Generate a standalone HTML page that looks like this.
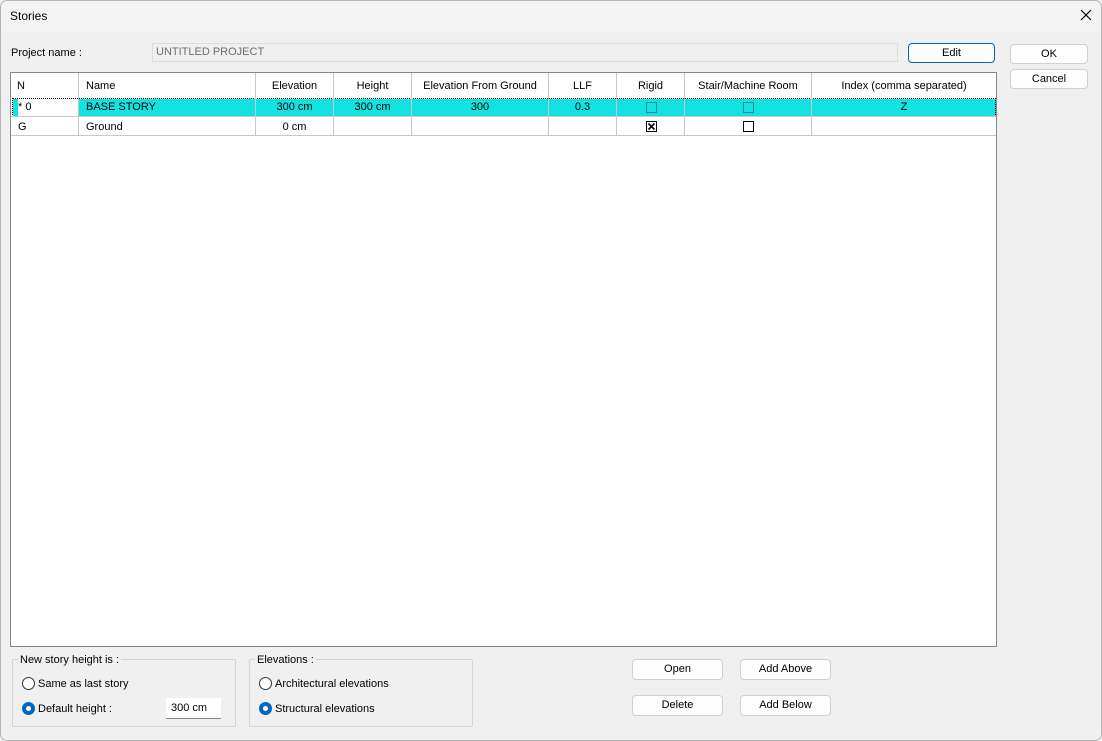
<!DOCTYPE html>
<html><head><meta charset="utf-8"><style>
*{box-sizing:border-box;margin:0;padding:0}
body{width:1102px;height:741px;background:#f0f0f0;font-family:"Liberation Sans",sans-serif;font-size:11px;color:#000;position:relative;overflow:hidden}
.a{position:absolute}
.win{left:0;top:0;width:1102px;height:741px;border:1px solid #b5b5b5;border-radius:7px;background:#f0f0f0}
.title{left:1px;top:1px;width:1100px;height:30px;background:#f3f3f3;border-radius:7px 7px 0 0}
.btn{background:#fdfdfd;border:1px solid #d0d0d0;border-radius:4px;text-align:center;line-height:18px;font-size:11px}
.tbl{left:10px;top:72px;width:987px;height:575px;background:#fff;border:1px solid #828790}
.vl{position:absolute;width:1px;background:#c8c8c8;top:0;height:63px}
.hl{position:absolute;height:1px;background:#c8c8c8;left:0;width:985px}
.t{position:absolute;line-height:14px;font-size:11px;white-space:nowrap}
.c{text-align:center}
.cb{position:absolute;width:11px;height:11px;border:1px solid #000;background:#fff}
.grp{border:1px solid #d5d5d5;border-radius:2px}
.radio{position:absolute;width:13px;height:13px;border-radius:50%;border:1px solid #333;background:#fff}
.radio.on{background:#0067c0;border-color:#0067c0}
.radio.on::after{content:"";position:absolute;left:3px;top:3px;width:5px;height:5px;border-radius:50%;background:#fff}
</style></head><body>
<div class="a win"></div>
<div class="a title"></div>
<div class="t" style="left:10px;top:9px;font-size:12px">Stories</div>
<svg class="a" style="left:1080px;top:9px" width="12" height="12"><path d="M1 1L11 11M11 1L1 11" stroke="#000" stroke-width="1.2"/></svg>

<div class="t" style="left:11px;top:46px">Project name :</div>
<div class="a" style="left:152px;top:43px;width:746px;height:19px;border:1px solid #dcdcdc;background:#f0f0f0"></div>
<div class="t" style="left:156px;top:45px;color:#6d6d6d">UNTITLED PROJECT</div>
<div class="a btn" style="left:908px;top:43px;width:87px;height:20px;border-color:#0067c0">Edit</div>
<div class="a btn" style="left:1010px;top:44px;width:78px;height:20px">OK</div>
<div class="a btn" style="left:1010px;top:69px;width:78px;height:20px">Cancel</div>

<div class="a tbl">
 <div class="a" style="left:2px;top:26px;width:5px;height:17px;background:#12e3e1"></div>
 <div class="a" style="left:67px;top:26px;width:918px;height:17px;background:#12e3e1"></div>
 <div class="a" style="left:1px;top:25px;width:984px;height:19px;border:1px dotted #000"></div>
 <div class="hl" style="top:43px"></div>
 <div class="hl" style="top:62px"></div>
 <div class="vl" style="left:67px"></div>
 <div class="vl" style="left:244px"></div>
 <div class="vl" style="left:322px"></div>
 <div class="vl" style="left:400px"></div>
 <div class="vl" style="left:537px"></div>
 <div class="vl" style="left:605px"></div>
 <div class="vl" style="left:673px"></div>
 <div class="vl" style="left:800px"></div>
 <div class="t" style="left:6px;top:6px">N</div>
 <div class="t" style="left:75px;top:6px">Name</div>
 <div class="t c" style="left:245px;width:77px;top:6px">Elevation</div>
 <div class="t c" style="left:323px;width:77px;top:6px">Height</div>
 <div class="t c" style="left:401px;width:136px;top:6px">Elevation From Ground</div>
 <div class="t c" style="left:538px;width:67px;top:6px">LLF</div>
 <div class="t c" style="left:606px;width:67px;top:6px">Rigid</div>
 <div class="t c" style="left:674px;width:126px;top:6px">Stair/Machine Room</div>
 <div class="t c" style="left:801px;width:184px;top:6px">Index (comma separated)</div>
 <div class="t" style="left:7px;top:27px">* 0</div>
 <div class="t" style="left:75px;top:27px">BASE STORY</div>
 <div class="t c" style="left:245px;width:77px;top:27px">300 cm</div>
 <div class="t c" style="left:323px;width:77px;top:27px">300 cm</div>
 <div class="t c" style="left:401px;width:136px;top:27px">300</div>
 <div class="t c" style="left:538px;width:67px;top:27px">0.3</div>
 <div class="cb" style="left:635px;top:29px;border-color:#1a8a8a;background:transparent"></div>
 <div class="cb" style="left:732px;top:29px;border-color:#1a8a8a;background:transparent"></div>
 <div class="t c" style="left:801px;width:184px;top:27px">Z</div>
 <div class="t" style="left:7px;top:47px">G</div>
 <div class="t" style="left:75px;top:47px">Ground</div>
 <div class="t c" style="left:245px;width:77px;top:47px">0 cm</div>
 <svg class="a" style="left:635px;top:48px" width="11" height="11"><rect x="0.5" y="0.5" width="10" height="10" fill="#fff" stroke="#000"/><path d="M2.5 2.5L8.5 8.5M8.5 2.5L2.5 8.5" stroke="#000" stroke-width="1.6"/></svg>
 <div class="cb" style="left:732px;top:48px"></div>
</div>

<div class="a grp" style="left:12px;top:659px;width:224px;height:68px"></div>
<div class="t" style="left:18px;top:653px;background:#f0f0f0;padding:0 2px">New story height is :</div>
<div class="radio" style="left:22px;top:677px"></div>
<div class="t" style="left:38px;top:677px">Same as last story</div>
<div class="radio on" style="left:22px;top:702px"></div>
<div class="t" style="left:38px;top:702px">Default height :</div>
<div class="a" style="left:166px;top:698px;width:55px;height:21px;background:#fff;border-bottom:1px solid #888"></div>
<div class="t" style="left:171px;top:701px">300 cm</div>

<div class="a grp" style="left:249px;top:659px;width:224px;height:68px"></div>
<div class="t" style="left:255px;top:653px;background:#f0f0f0;padding:0 2px">Elevations :</div>
<div class="radio" style="left:259px;top:677px"></div>
<div class="t" style="left:275px;top:677px">Architectural elevations</div>
<div class="radio on" style="left:259px;top:702px"></div>
<div class="t" style="left:275px;top:702px">Structural elevations</div>

<div class="a btn" style="left:632px;top:659px;width:91px;height:21px">Open</div>
<div class="a btn" style="left:740px;top:659px;width:91px;height:21px">Add Above</div>
<div class="a btn" style="left:632px;top:695px;width:91px;height:21px">Delete</div>
<div class="a btn" style="left:740px;top:695px;width:91px;height:21px">Add Below</div>
</body></html>
